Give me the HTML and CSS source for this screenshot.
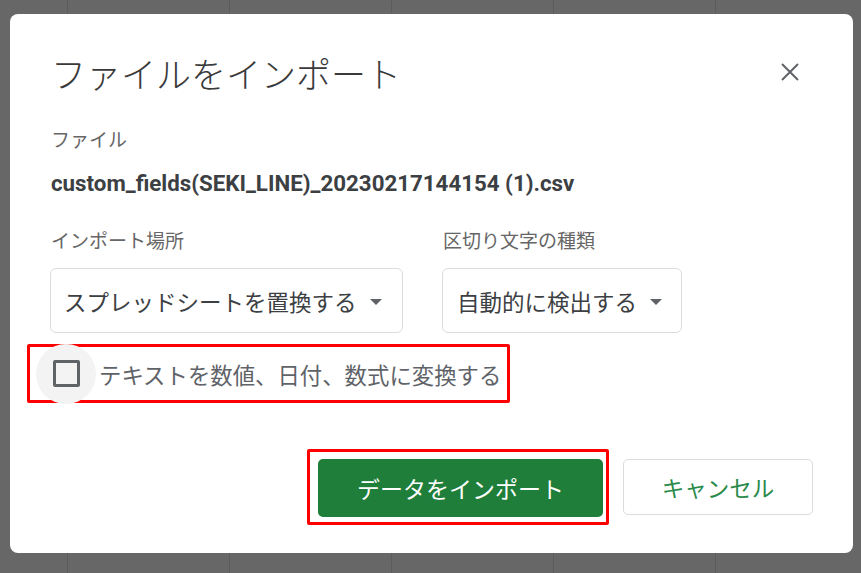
FILE: index.html
```html
<!DOCTYPE html>
<html lang="ja">
<head>
<meta charset="utf-8">
<title>ファイルをインポート</title>
<link rel="stylesheet" href="styles.css">
</head>
<body>
<div class="dialog">
  <div class="header">
    <div class="title">ファイルをインポート</div>
    <svg class="close" width="18" height="18" viewBox="0 0 18 18"><path d="M1 1 L17 17 M17 1 L1 17" stroke="#5f6368" stroke-width="2" fill="none"/></svg>
  </div>
  <div class="label file-label">ファイル</div>
  <div class="filename">custom_fields(SEKI_LINE)_20230217144154 (1).csv</div>
  <div class="options">
    <div class="label">インポート場所</div>
    <div class="label">区切り文字の種類</div>
    <div class="select select-a"><span>スプレッドシートを置換する</span><span class="arrow"></span></div>
    <div class="select select-b"><span>自動的に検出する</span><span class="arrow"></span></div>
  </div>
  <div class="check-row">
    <span class="cb-wrap"><span class="cb"></span></span>
    <span class="cb-text">テキストを数値、日付、数式に変換する</span>
  </div>
  <div class="actions">
    <div class="highlight"><button class="btn-primary">データをインポート</button></div>
    <button class="btn-cancel">キャンセル</button>
  </div>
</div>
</body>
</html>
```
FILE: styles.css
```css
html, body { margin: 0; padding: 0; }
body {
  width: 861px;
  height: 573px;
  overflow: hidden;
  background-color: #676767;
  background-image: repeating-linear-gradient(90deg, transparent 0, transparent 114px, #5c5c5c 114px, #5c5c5c 115px, transparent 115px, transparent 162px);
  background-position: -47px 0;
  font-family: "Noto Sans CJK JP", "Noto Sans", sans-serif;
  padding-top: 14px;
  padding-left: 10px;
  box-sizing: border-box;
}
.dialog {
  width: 843px;
  height: 539px;
  box-sizing: border-box;
  background: #fff;
  border-radius: 8px;
  padding: 35px 40px 0 40px;
  display: flex;
  flex-direction: column;
}
.header {
  display: flex;
  justify-content: space-between;
  align-items: center;
  height: 48px;
}
.title {
  font-size: 35px;
  line-height: 48px;
  color: #3a3a3a;
  margin-left: 1px;
  font-weight: 300;
}
.close { margin-right: 14px; margin-top: -2px; }
.label {
  font-size: 19px;
  line-height: 24px;
  color: #666;
  margin-left: 1px;
}
.file-label { margin-top: 30px; }
.filename {
  margin-top: 20px;
  font-family: Roboto, "Liberation Sans", sans-serif;
  font-weight: 700;
  font-size: 22.3px;
  line-height: 24px;
  color: #3c4043;
  margin-left: 1px;
}
.options {
  margin-top: 33px;
  display: grid;
  grid-template-columns: 353px 240px;
  column-gap: 39px;
  row-gap: 16px;
}
.select {
  height: 65px;
  box-sizing: border-box;
  border: 1px solid #dadce0;
  border-radius: 6px;
  display: flex;
  align-items: center;
  padding-left: 13px;
  font-size: 22.5px;
  color: #3c4043;
}
.select-b { padding-left: 14px; }
.arrow {
  width: 0;
  height: 0;
  border-left: 6px solid transparent;
  border-right: 6px solid transparent;
  border-top: 6px solid #5f6368;
  margin-left: 13px;
  margin-top: 2px;
}
.check-row {
  margin-top: 11px;
  margin-left: -23px;
  width: 483px;
  height: 59px;
  box-sizing: border-box;
  border: 3px solid #ff0000;
  border-radius: 2px;
  display: flex;
  align-items: center;
  padding-left: 23px;
}
.cb-wrap {
  position: relative;
  width: 27px;
  height: 27px;
}
.cb-wrap::before {
  content: "";
  position: absolute;
  left: -17px;
  top: -16px;
  width: 60px;
  height: 60px;
  border-radius: 50%;
  background: #f3f3f3;
}
.cb {
  position: relative;
  display: block;
  width: 27px;
  height: 27px;
  box-sizing: border-box;
  border: 3px solid #5f6368;
  border-radius: 2px;
}
.cb-text {
  margin-left: 19px;
  font-size: 22.4px;
  color: #5f6368;
  position: relative;
}
.actions {
  margin-top: 46px;
  display: flex;
  justify-content: flex-end;
  align-items: center;
}
.highlight {
  border: 3px solid #ff0000;
  border-radius: 2px;
  padding: 7px 3px 5px 8px;
}
.btn-primary {
  display: block;
  width: 285px;
  height: 58px;
  border: none;
  border-radius: 5px;
  background: #1e7e3a;
  color: #fff;
  font-family: "Noto Sans CJK JP", "Noto Sans", sans-serif;
  font-size: 23px;
  padding: 0;
}
.btn-cancel {
  margin-left: 14px;
  width: 190px;
  height: 56px;
  border: 1px solid #dadce0;
  border-radius: 5px;
  background: #fff;
  color: #2a8a4a;
  font-family: "Noto Sans CJK JP", "Noto Sans", sans-serif;
  font-size: 22.5px;
  padding: 0;
}
```
